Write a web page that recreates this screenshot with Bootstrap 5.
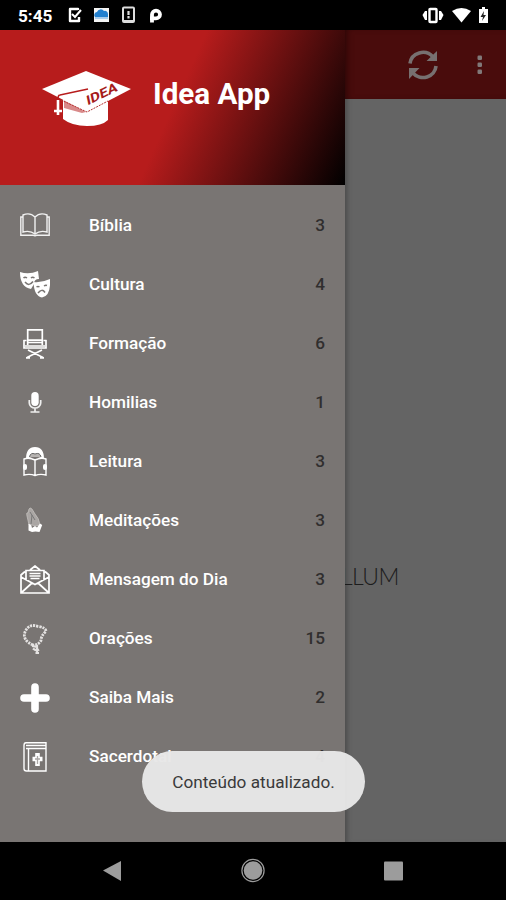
<!DOCTYPE html>
<html lang="pt-BR">
<head>
<meta charset="utf-8">
<meta name="viewport" content="width=device-width, initial-scale=1">
<title>Idea App</title>
<link rel="stylesheet" href="https://cdn.jsdelivr.net/npm/bootstrap@5.3.0/dist/css/bootstrap.min.css">
<style>
body{font-family:Roboto,"Liberation Sans",sans-serif;background:#000}
.screen{width:506px;height:900px;background:#000}
.statusbar{height:30px;padding:0 15px 0 18px}
.clock{font-size:17.2px;font-weight:700;line-height:30px;width:35px;margin:2px 14px 0 0}
.drawer{width:345px;background:#797573}
.drawer-head{height:155px;padding-left:42px;background:linear-gradient(114.2deg,#b71c1c 0%,#b71c1c 50%,#000 100%)}
.brand{font-size:29.6px;font-weight:700;line-height:32px;margin:48px 0 0 22px;white-space:nowrap}
.cap{margin-top:41px}
.menu{padding:11px 20px 0}
.entry{height:59.1px;color:#fff;font-size:17.2px;font-weight:500;text-decoration:none}
.entry svg{width:30px;height:30px;margin-right:39px;flex:none}
.entry .count{color:#302e2e}
.page{background:#646464;box-shadow:inset 5px 0 5px -3px #4a4a4a}
.appbar{height:69px;background:#490c0c;padding-right:22px;box-shadow:inset 5px 0 6px -3px #2c0606}
.refresh{margin-right:28px}
.slogan{margin:462px 0 0 -4px;font-family:Lato,Roboto,sans-serif;font-weight:300;font-size:23px;line-height:30px;color:#1c1c1c;letter-spacing:-.6px}
.softkeys{height:58px}
.notice{left:142px;top:751px;width:223px;height:61px;border-radius:30.5px;background:rgba(231,231,231,.97);color:#3a3a3a;font-size:17.2px;padding-top:3px}
</style>
<script src="https://cdn.jsdelivr.net/npm/bootstrap@5.3.0/dist/js/bootstrap.bundle.min.js"></script>
</head>
<body class="overflow-hidden">
<div class="screen position-relative d-flex flex-column overflow-hidden">
  <header class="statusbar d-flex align-items-center text-white flex-shrink-0">
    <span class="clock">5:45</span>
    <svg width="96" height="18" viewBox="0 0 96 18">
      <path d="M11 4V3H3v12h9v-4" fill="none" stroke="#fff" stroke-width="2.4" stroke-linejoin="round"/><path d="M5 8l3 3 6-7" fill="none" stroke="#fff" stroke-width="2"/>
      <path fill="#f4f4f4" d="M27 2h15v14H27z"/><path fill="#2380cf" d="M28 11a3 3 0 0 1 2-5 4 4 0 0 1 7-1 3 3 0 0 1 4 3v3z"/><path fill="#a8cceb" d="M28 11h13v2H28z"/>
      <rect x="56" y="1.5" width="11" height="14.500" rx="1" fill="none" stroke="#ddd" stroke-width="2"/><path stroke="#ddd" stroke-width="2.200" d="M61.500 5v4m0 1v2.500M56 15h11"/>
      <path d="M85 16.500V8.500a4 3.900 0 1 1 4 3.900H83" fill="none" stroke="#fff" stroke-width="3.800"/>
    </svg>
    <svg class="ms-auto" width="70" height="20" viewBox="0 0 70 20">
      <path fill="#fff" d="M1.500 10L4 6h2v9H4zM22.500 10L20 6h-2v9h2z"/><rect x="8.500" y="4" width="7" height="13" rx=".7" fill="none" stroke="#fff" stroke-width="2.400"/>
      <path fill="#fff" d="M31 6q9.500-6 19 0L40.500 17.500z"/>
      <path fill="#fff" d="M58 4h3V2h3v2h3v14h-9z"/><path fill="#222" d="M63 6l-3.500 6h2.500L61 16l4-6h-2.500z"/>
    </svg>
  </header>

  <main class="d-flex flex-grow-1 overflow-hidden">
    <nav class="drawer flex-shrink-0">
      <div class="drawer-head d-flex align-items-start text-white">
        <svg class="cap flex-shrink-0" width="89" height="56" viewBox="0 0 89 56">
          <path fill="#fff" d="M21 28L45 40 66 29v20q-6 6-21 6t-24-7z"/>
          <path fill="#d98a8a" d="M22 29L44 41 40 42 22 37z"/>
          <path fill="#fff" d="M0 18L44 0 89 18 45 41z"/>
          <path d="M19 29L45 41 66 30" fill="none" stroke="#b53030" stroke-width="1" stroke-dasharray="2 1"/>
          <path d="M46 18L18 24q-2 0-2 4v9" fill="none" stroke="#b71c1c" stroke-width="1.600"/>
          <path d="M16 29v15M12 40h8" stroke="#fff" stroke-width="2.600"/>
          <text transform="translate(45.500 34.500) rotate(-26) skewX(-14)" font-family="Roboto,sans-serif" font-weight="700" font-size="12.500" textLength="34" lengthAdjust="spacingAndGlyphs" fill="#a51b1b">IDEA</text>
        </svg>
        <div class="brand">Idea App</div>
      </div>
      <div class="menu d-flex flex-column">
        <a class="entry d-flex align-items-center"><svg viewBox="0 0 30 30" fill="none" stroke="#f1f1f1" stroke-width="1.400"><path d="M15 6q-5-5-12-2v17q7-2 12 2 5-4 12-2V4q-7-3-12 2zM15 6v17M3 6H.8v18.200H13q2 1 4 0h12.200V6H27"/></svg>Bíblia<span class="count ms-auto">3</span></a>
        <a class="entry d-flex align-items-center"><svg viewBox="0 0 30 30"><path fill="#fff" d="M0 2q9 3 18-1l1 8q-5 0-5 5l-3 5Q0 17 0 2z"/><path fill="#fff" d="M13.500 12q8 1 16.500-3 1 17-8 18.500-8-1.500-8.500-15.500z"/><g fill="none" stroke="#797573" stroke-width="1.500"><path d="M3.500 8q1.500-1.500 3.500 0M11 8q1.500-1.500 3.500 0M5 12q4 5 8-.5M16.500 17q1.500-1 3 0M24 16q1.500-1 3-.5M18 23q4-5 7-.5"/></g></svg>Cultura<span class="count ms-auto">4</span></a>
        <a class="entry d-flex align-items-center"><svg viewBox="0 0 30 30" fill="none" stroke="#fff" stroke-width="1.700"><path d="M7.700 16V.9h14.600V16M8 11.200h14M8 13.500h14M4 11v8h22v-8M3.500 11.500h3M23.500 11.500h3M5 17h20M8 21l15 7.500M22 21L7 28.500M6 28.800h4M20 28.800h4"/></svg>Formação<span class="count ms-auto">6</span></a>
        <a class="entry d-flex align-items-center"><svg viewBox="0 0 30 30"><rect x="11.300" y="4" width="7.400" height="14" rx="3.700" fill="#fff"/><path d="M9.300 12v3a5.700 5 0 0 0 11.400 0v-3M15 20v4M10.500 24h9" fill="none" stroke="#eee" stroke-width="1.700"/></svg>Homilias<span class="count ms-auto">1</span></a>
        <a class="entry d-flex align-items-center"><svg viewBox="0 0 30 30"><path fill="#fff" d="M6 12Q6 0 15 0t9 12l-3-1q-6-3-12 0z"/><path d="M9.500 10q1-5 5.500-3 5-2 6 3" fill="#b7b4b2" stroke="#666" stroke-width="1"/><path d="M15 13q-6-3-11-1v16q6-1.500 11 .5 5-2 11-.5V12q-5-2-11 1zm0 0v15" fill="none" stroke="#fff" stroke-width="1.400"/><rect x="3" y="17" width="4" height="6" rx="2" fill="#fff"/><rect x="23" y="17" width="4" height="6" rx="2" fill="#fff"/></svg>Leitura<span class="count ms-auto">3</span></a>
        <a class="entry d-flex align-items-center"><svg viewBox="0 0 30 30"><path d="M9 19L7 10q-1-4 1-3l1-4q1-2 3 0l3 5q4 4 5 11l-4 1q-3-1-7-1z" fill="#aaa6a4" stroke="#c8c5c3" stroke-width=".7"/><path d="M10 6l5 8M12 9l-1 9" stroke="#777" fill="none"/><path fill="#fff" d="M8.500 18q3 0 3.500 4l3-2 2 1.500 3-4 2.200 1.500L19.500 26l-4-.5-3.500.5-3.500-1.500z"/></svg>Meditações<span class="count ms-auto">3</span></a>
        <a class="entry d-flex align-items-center"><svg viewBox="0 0 30 30" fill="none" stroke="#fff" stroke-width="1.700"><path d="M5 6.500L1 10v18h28V10l-4-3.500M6 15V5.500h18V15M10 5l5-4 5 4M1 12l14 7.500 14-7.500M1 28l11-10M29 28L18 18"/><path stroke-width="1.300" d="M9.500 8.500h11M9.500 11h11M10.500 13.500h9"/></svg>Mensagem do Dia<span class="count ms-auto">3</span></a>
        <a class="entry d-flex align-items-center"><svg viewBox="0 0 30 30" fill="none" stroke="#e4e2e1"><path d="M13 21Q2 16 5 8 9-1 18 2.500q8 1 8 5-5 4-5 9-3 5-8 4.500z" stroke-width="2.800" stroke-dasharray="2.200 .9"/><path d="M12 22l5 1M17 21v9M13 24.500q3 3 6 1M15.500 29h3.500" stroke-width="2.200"/></svg>Orações<span class="count ms-auto">15</span></a>
        <a class="entry d-flex align-items-center"><svg viewBox="0 0 30 30"><path d="M15 4v22M4 15h22" stroke="#fff" stroke-width="7.600" stroke-linecap="round"/></svg>Saiba Mais<span class="count ms-auto">2</span></a>
        <a class="entry d-flex align-items-center"><svg viewBox="0 0 30 30" fill="none" stroke="#fff" stroke-width="1.400"><path d="M26 6.500V.8H6Q4 .8 4 3.500v23q0 2.500 2.500 2.500H26V6.500H6M8.500 6.500V29M6 3.500h20"/><path d="M17.500 11v13M12.500 17h10" stroke-width="4.600"/><path d="M17.500 14v8M15 17h5" stroke="#aaa6a4" stroke-width="1.300"/></svg>Sacerdotal<span class="count ms-auto">4</span></a>
      </div>
    </nav>
    <section class="page flex-grow-1 overflow-hidden">
      <div class="appbar d-flex align-items-center justify-content-end">
        <svg class="refresh" width="32" height="32" viewBox="0 0 32 32" fill="none" stroke="#777070" stroke-width="3.600"><path d="M3 14.500A13 12.500 0 0 1 26 8M29 17A13 12.500 0 0 1 6 24"/><path fill="#777070" stroke="none" d="M30 2v10H19.500zM2 30V19h10.500z"/></svg>
        <svg width="17" height="24" viewBox="0 0 17 24" fill="#817979"><rect x="10.500" y="2.500" width="4.500" height="4.500" rx="1.200"/><rect x="10.500" y="9.500" width="4.500" height="4.500" rx="1.200"/><rect x="10.500" y="16.500" width="4.500" height="4.500" rx="1.200"/></svg>
      </div>
      <div class="slogan">LLUM</div>
    </section>
  </main>

  <footer class="softkeys d-flex flex-shrink-0">
    <svg width="506" height="58" viewBox="0 0 506 58" fill="#9c9c9c"><path d="M103 28.500L121 19v20z"/><circle cx="253" cy="28.500" r="9.300"/><circle cx="253" cy="28.500" r="11.100" fill="none" stroke="#9c9c9c" stroke-width="1.200"/><rect x="384" y="19.500" width="19" height="19" rx="1"/></svg>
  </footer>

  <div class="notice position-absolute d-flex align-items-center justify-content-center" role="status">Conteúdo atualizado.</div>
</div>
</body>
</html>
